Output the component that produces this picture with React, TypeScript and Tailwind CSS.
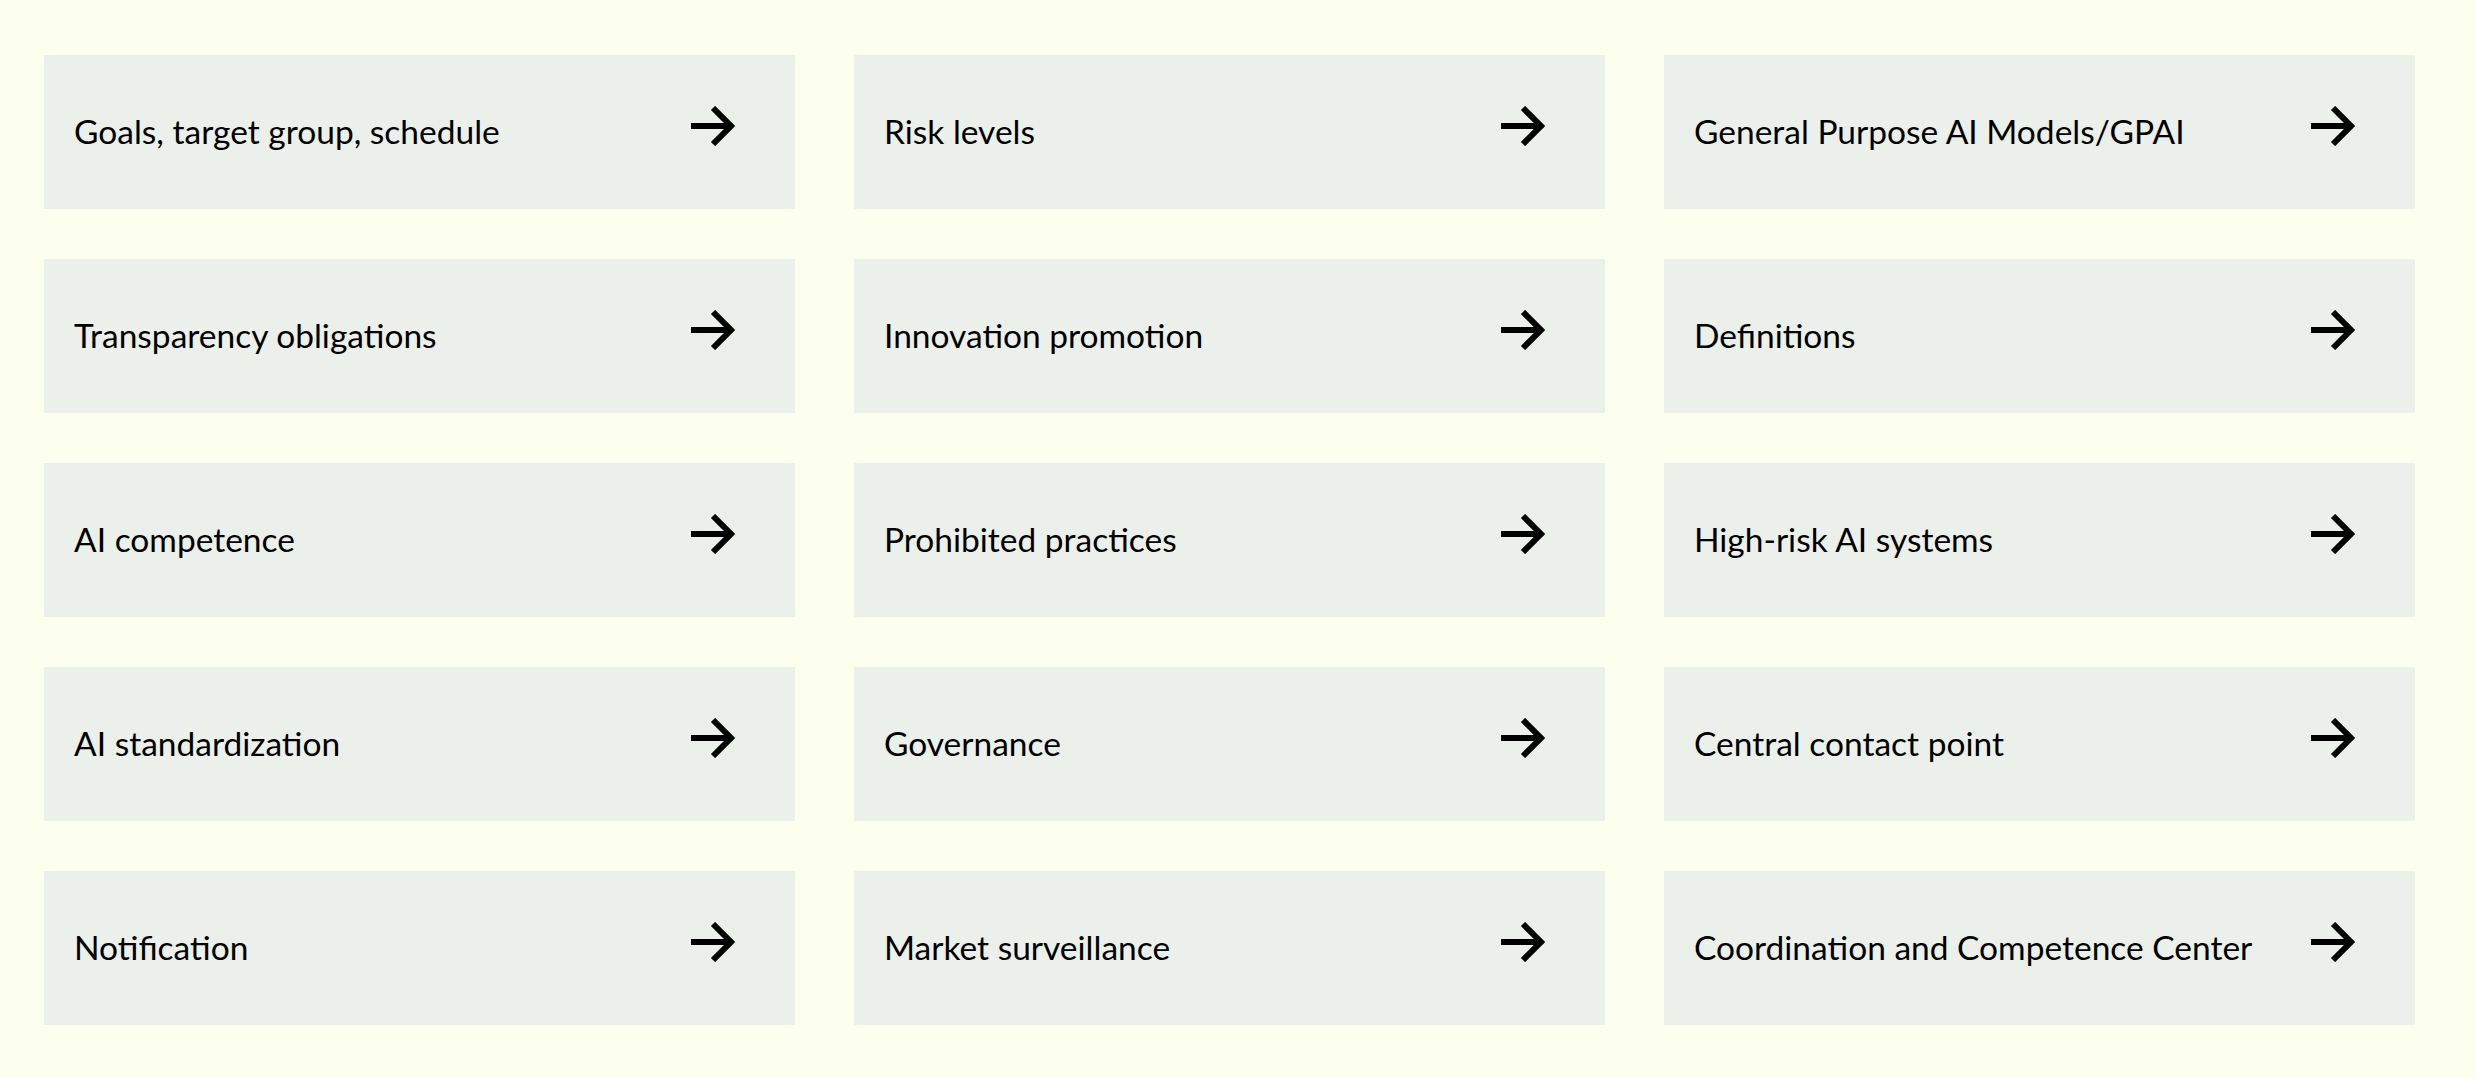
const topics = [
  "Goals, target group, schedule",
  "Risk levels",
  "General Purpose AI Models/GPAI",
  "Transparency obligations",
  "Innovation promotion",
  "Definitions",
  "AI competence",
  "Prohibited practices",
  "High-risk AI systems",
  "AI standardization",
  "Governance",
  "Central contact point",
  "Notification",
  "Market surveillance",
  "Coordination and Competence Center",
];

function ArrowIcon() {
  return (
    <svg width="44" height="40" viewBox="0 0 44 40" fill="none" aria-hidden="true">
      <path d="M0 20H41" stroke="#000" strokeWidth="6" />
      <path d="M22 2L40 20L22 38" stroke="#000" strokeWidth="6" strokeLinejoin="miter" />
    </svg>
  );
}

export default function App() {
  return (
    <div className="min-h-screen bg-[#fdffee] pl-[44px] pt-[55px] pb-[53px] font-['Lato',sans-serif]">
      <div className="grid grid-cols-[repeat(3,751px)] gap-x-[59px] gap-y-[50px]">
        {topics.map((t) => (
          <a
            key={t}
            href="#"
            className="flex h-[154px] items-center justify-between bg-[#ebf0ea] pl-[30px] pr-[60px] text-black"
          >
            <span className="text-[33.5px] leading-none">{t}</span>
            <span className="-mt-[12px]">
              <ArrowIcon />
            </span>
          </a>
        ))}
      </div>
    </div>
  );
}
